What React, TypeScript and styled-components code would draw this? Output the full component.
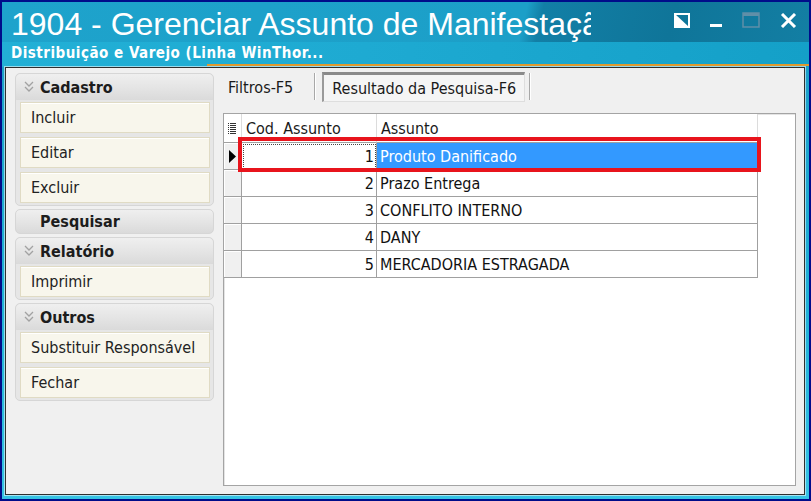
import styled, { createGlobalStyle } from 'styled-components'

const GlobalStyle = createGlobalStyle`
  html, body {
    margin: 0;
    padding: 0;
    background: #000c8a;
  }
  body {
    font-family: 'DejaVu Sans Condensed', 'DejaVu Sans', sans-serif;
  }
`

const Window = styled.div`
  width: 811px;
  height: 501px;
  box-sizing: border-box;
  border: 2px solid #000c8a;
  padding: 0 4px 4px 3px;
  display: flex;
  flex-direction: column;
  background: linear-gradient(180deg, #1a9cc6 0%, #1fb0d6 60%, #36c3e4 100%);
`

const TitleBar = styled.div`
  height: 65px;
  margin: 0 -4px 0 -3px;
  display: flex;
  flex-direction: column;
  background: linear-gradient(103deg, #1ea3cc 0%, #1c9fc8 64%, #127fa6 66%, #0f7599 82%, #137fa4 100%);
`

const TitleRow = styled.div`
  height: 40px;
  display: flex;
  align-items: flex-start;
  padding: 4px 12px 0 9px;
  box-sizing: border-box;
`

const Title = styled.h1`
  margin: 0;
  width: 580px;
  overflow: hidden;
  white-space: nowrap;
  font-family: 'Liberation Sans', Arial, sans-serif;
  font-weight: 400;
  font-size: 32px;
  line-height: 36px;
  color: #ffffff;
`

const Controls = styled.div`
  margin-left: auto;
  display: flex;
  align-items: center;
  gap: 20px;
  padding-top: 6px;
`

const SubtitleRow = styled.div`
  flex: 1;
  display: flex;
  flex-direction: column;
  background: linear-gradient(90deg, #22b0d6 0%, #1eaad2 45%, #14a0c8 100%);
`

const Subtitle = styled.div`
  padding: 3px 0 0 9px;
  font-family: 'DejaVu Sans Condensed', 'DejaVu Sans', sans-serif;
  font-weight: 700;
  font-size: 15px;
  letter-spacing: 0.5px;
  line-height: 16px;
  color: #ffffff;
`

const AccentLine = styled.div`
  margin: 3px 0 0 205px;
  height: 2px;
  background: #e09a2e;
`

const Content = styled.div`
  flex: 1;
  display: flex;
  gap: 9px;
  padding: 4px 8px 8px 9px;
  background: #f0f0f0;
  border: 1px solid #2e2e2e;
  box-shadow: 0 0 0 1px rgba(255, 255, 255, 0.55);
`

const Sidebar = styled.div`
  width: 199px;
  margin-top: 1px;
  display: flex;
  flex-direction: column;
  gap: 3px;
`

const Group = styled.div`
  display: flex;
  flex-direction: column;
  gap: 4px;
  padding: 0 3px 2px 4px;
  border: 1px solid #d6d6d6;
  border-radius: 5px;
  background: #e6e6e6;
`

const GroupHeader = styled.div<{ $solo?: boolean }>`
  height: ${(p) => (p.$solo ? '25px' : '26px')};
  margin: 0 -3px -2px -4px;
  padding-left: ${(p) => (p.$solo ? '24px' : '8px')};
  display: flex;
  align-items: center;
  gap: 6px;
  box-sizing: border-box;
  border-radius: 5px 5px 0 0;
  background: linear-gradient(180deg, #efefef 0%, #e4e4e4 55%, #dadada 100%);
  font-weight: 700;
  font-size: 16px;
  color: #1c1c1c;
`

const SoloHeader = styled(GroupHeader)`
  margin: 0;
  border: 1px solid #d6d6d6;
  border-radius: 5px;
`

const ActionButton = styled.div`
  height: 31px;
  box-sizing: border-box;
  display: flex;
  align-items: center;
  padding-left: 10px;
  background: #f8f6ec;
  border: 1px solid #e0dbc4;
  box-shadow: inset 0 1px 0 #ffffff;
  font-size: 16px;
  color: #222222;
`

const Main = styled.div`
  flex: 1;
  display: flex;
  flex-direction: column;
`

const Tabs = styled.div`
  height: 30px;
  display: flex;
  align-items: stretch;
`

const Tab = styled.div<{ $active?: boolean }>`
  display: flex;
  align-items: center;
  box-sizing: border-box;
  font-size: 16px;
  color: #1a1a1a;
  padding: ${(p) => (p.$active ? '0 8px' : '0 21px 0 5px')};
  margin: ${(p) => (p.$active ? '0 4px 0 7px' : '0')};
  background: ${(p) => (p.$active ? '#f5f5f5' : 'transparent')};
  border-top: ${(p) => (p.$active ? '3px solid #8a8a8a' : '0')};
  border-left: ${(p) => (p.$active ? '2px solid #9a9a9a' : '0')};
  border-right: ${(p) => (p.$active ? '1px solid #dedede' : '0')};
  border-bottom: ${(p) => (p.$active ? '1px solid #dedede' : '0')};
`

const TabDivider = styled.div`
  width: 1px;
  margin: 1px 0 2px;
  background: #a8a8a8;
  box-shadow: 1px 0 0 #ffffff;
`

const GridFrame = styled.div`
  position: relative;
  flex: 1;
  margin-top: 11px;
  background: #ffffff;
  border: 1px solid #a4a4a4;
  box-shadow: inset 1px 1px 0 #e4e4e4;
`

const Table = styled.div`
  display: grid;
  grid-template-columns: 18px 135px 381px;
  grid-template-rows: 29px;
  grid-auto-rows: 27px;
`

const HeadCell = styled.div`
  display: flex;
  align-items: center;
  box-sizing: border-box;
  padding-left: 4px;
  background: #ffffff;
  border-right: 1px solid #dcdcdc;
  border-bottom: 1px solid #a0a0a0;
  font-size: 16px;
  color: #1a1a1a;
`

const Indicator = styled.div`
  display: flex;
  align-items: center;
  justify-content: center;
  box-sizing: border-box;
  background: #f0f0f0;
  border-right: 1px solid #a0a0a0;
  border-bottom: 1px solid #a0a0a0;
  box-shadow: inset 1px 1px 0 #ffffff;
`

const Cell = styled.div<{ $num?: boolean; $selected?: boolean; $focused?: boolean }>`
  display: flex;
  align-items: center;
  justify-content: ${(p) => (p.$num ? 'flex-end' : 'flex-start')};
  box-sizing: border-box;
  padding: ${(p) => (p.$num ? '0 2px 0 0' : '0 0 0 3px')};
  border-right: 1px solid #a0a0a0;
  border-bottom: 1px solid #a0a0a0;
  background: ${(p) => (p.$selected ? '#3399ff' : '#ffffff')};
  color: ${(p) => (p.$selected ? '#ffffff' : '#111111')};
  outline: ${(p) => (p.$focused ? '1px dotted #444444' : 'none')};
  outline-offset: -2px;
  font-size: 16px;
  white-space: nowrap;
`

const Highlight = styled.div`
  position: absolute;
  left: 14px;
  top: 23px;
  width: 523px;
  height: 35px;
  box-sizing: border-box;
  border: 4px solid #e8141c;
  pointer-events: none;
`

const Chevron = () => (
  <svg width="10" height="12" viewBox="0 0 10 12">
    <path d="M1 1 L5 5 L9 1 M1 6 L5 10 L9 6" fill="none" stroke="#a2a2a2" strokeWidth="1.3" />
  </svg>
)

const ColumnsIcon = () => (
  <svg width="8" height="13" viewBox="0 0 8 13">
    {[0, 1, 2, 3, 4, 5].map((i) => (
      <g key={i} fill="#333333">
        <rect x="0" y={i * 2 + 1} width="1" height="1" />
        <rect x="2" y={i * 2 + 1} width="6" height="1" />
      </g>
    ))}
  </svg>
)

const RowPointer = () => (
  <svg width="7" height="13" viewBox="0 0 7 13">
    <polygon points="0,0 7,6.5 0,13" fill="#000000" />
  </svg>
)

// white frame, lower-left half filled
const DockIcon = () => (
  <svg width="16" height="15" viewBox="0 0 16 15">
    <rect x="1" y="1" width="14" height="13" fill="none" stroke="#ffffff" strokeWidth="2" />
    <polygon points="1,1 15,14 1,14" fill="#ffffff" />
  </svg>
)

const MinimizeIcon = () => (
  <svg width="12" height="15" viewBox="0 0 12 15">
    <rect x="0" y="11" width="12" height="3" fill="#ffffff" />
  </svg>
)

const MaximizeIcon = () => (
  <svg width="18" height="16" viewBox="0 0 18 16">
    <rect x="1" y="1" width="16" height="14" fill="none" stroke="#5f8fa8" strokeWidth="1.5" />
    <rect x="1" y="1" width="16" height="3" fill="#5f8fa8" />
  </svg>
)

const CloseIcon = () => (
  <svg width="17" height="15" viewBox="0 0 17 15">
    <path d="M2 1 L15 14 M15 1 L2 14" stroke="#ffffff" strokeWidth="3" />
  </svg>
)

const rows = [
  { cod: 1, assunto: 'Produto Danificado' },
  { cod: 2, assunto: 'Prazo Entrega' },
  { cod: 3, assunto: 'CONFLITO INTERNO' },
  { cod: 4, assunto: 'DANY' },
  { cod: 5, assunto: 'MERCADORIA ESTRAGADA' },
]

export default function App() {
  return (
    <>
      <GlobalStyle />
      <Window>
        <TitleBar>
          <TitleRow>
            <Title>1904 - Gerenciar Assunto de Manifestação</Title>
            <Controls>
              <DockIcon />
              <MinimizeIcon />
              <MaximizeIcon />
              <CloseIcon />
            </Controls>
          </TitleRow>
          <SubtitleRow>
            <Subtitle>Distribuição e Varejo (Linha WinThor...</Subtitle>
            <AccentLine />
          </SubtitleRow>
        </TitleBar>
        <Content>
          <Sidebar>
            <Group>
              <GroupHeader>
                <Chevron />
                Cadastro
              </GroupHeader>
              <ActionButton>Incluir</ActionButton>
              <ActionButton>Editar</ActionButton>
              <ActionButton>Excluir</ActionButton>
            </Group>
            <SoloHeader $solo>Pesquisar</SoloHeader>
            <Group>
              <GroupHeader>
                <Chevron />
                Relatório
              </GroupHeader>
              <ActionButton>Imprimir</ActionButton>
            </Group>
            <Group>
              <GroupHeader>
                <Chevron />
                Outros
              </GroupHeader>
              <ActionButton>Substituir Responsável</ActionButton>
              <ActionButton>Fechar</ActionButton>
            </Group>
          </Sidebar>
          <Main>
            <Tabs>
              <Tab>Filtros-F5</Tab>
              <TabDivider />
              <Tab $active>Resultado da Pesquisa-F6</Tab>
              <TabDivider />
            </Tabs>
            <GridFrame>
              <Table>
                <HeadCell>
                  <ColumnsIcon />
                </HeadCell>
                <HeadCell>Cod. Assunto</HeadCell>
                <HeadCell>Assunto</HeadCell>
                {rows.map((r, i) => (
                  <>
                    <Indicator key={`i${r.cod}`}>{i === 0 && <RowPointer />}</Indicator>
                    <Cell key={`c${r.cod}`} $num $focused={i === 0}>
                      {r.cod}
                    </Cell>
                    <Cell key={`a${r.cod}`} $selected={i === 0}>
                      {r.assunto}
                    </Cell>
                  </>
                ))}
              </Table>
              <Highlight />
            </GridFrame>
          </Main>
        </Content>
      </Window>
    </>
  )
}
